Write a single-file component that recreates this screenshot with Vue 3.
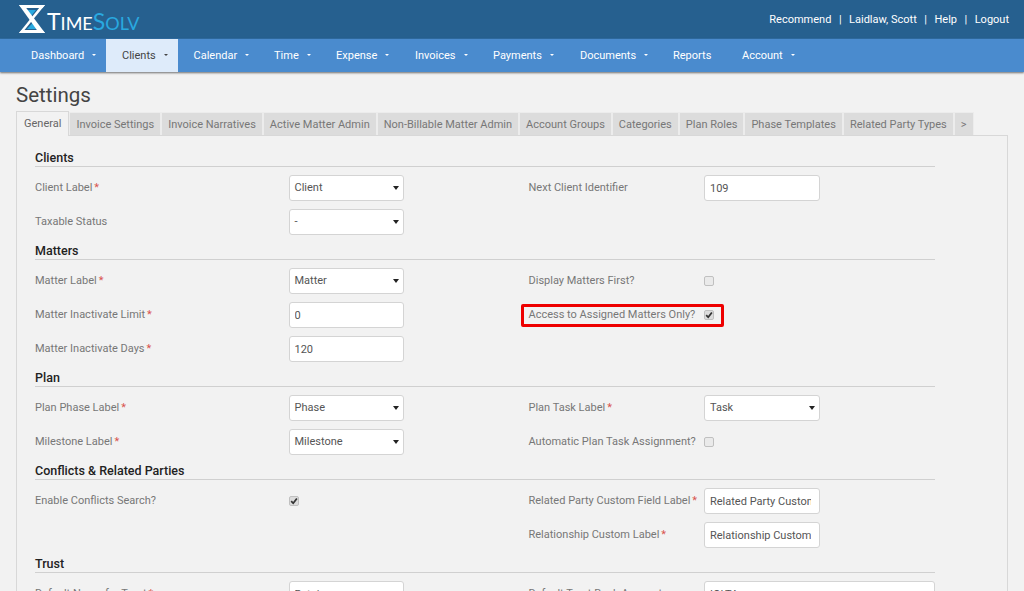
<script setup>
const navItems = [
  { label: 'Dashboard', caret: true, w: 91 },
  { label: 'Clients', caret: true, w: 71.5, active: true },
  { label: 'Calendar', caret: true, w: 80.5 },
  { label: 'Time', caret: true, w: 62 },
  { label: 'Expense', caret: true, w: 79 },
  { label: 'Invoices', caret: true, w: 78 },
  { label: 'Payments', caret: true, w: 87 },
  { label: 'Documents', caret: true, w: 93 },
  { label: 'Reports', caret: false, w: 69 },
  { label: 'Account', caret: true, w: 81 }
]
const tabs = ['General', 'Invoice Settings', 'Invoice Narratives', 'Active Matter Admin', 'Non-Billable Matter Admin', 'Account Groups', 'Categories', 'Plan Roles', 'Phase Templates', 'Related Party Types', '>']
const sections = [
  {
    title: 'Clients',
    rows: [
      [{ label: 'Client Label', req: true, type: 'select', value: 'Client' }, { label: 'Next Client Identifier', type: 'input', value: '109' }],
      [{ label: 'Taxable Status', type: 'select', value: '-' }, null]
    ]
  },
  {
    title: 'Matters',
    rows: [
      [{ label: 'Matter Label', req: true, type: 'select', value: 'Matter' }, { label: 'Display Matters First?', type: 'check', checked: false }],
      [{ label: 'Matter Inactivate Limit', req: true, type: 'input', value: '0' }, { label: 'Access to Assigned Matters Only?', type: 'check', checked: true, mark: true }],
      [{ label: 'Matter Inactivate Days', req: true, type: 'input', value: '120' }, null]
    ]
  },
  {
    title: 'Plan',
    rows: [
      [{ label: 'Plan Phase Label', req: true, type: 'select', value: 'Phase' }, { label: 'Plan Task Label', req: true, type: 'select', value: 'Task' }],
      [{ label: 'Milestone Label', req: true, type: 'select', value: 'Milestone' }, { label: 'Automatic Plan Task Assignment?', type: 'check', checked: false }]
    ]
  },
  {
    title: 'Conflicts & Related Parties',
    rows: [
      [{ label: 'Enable Conflicts Search?', type: 'check', checked: true }, { label: 'Related Party Custom Field Label', req: true, type: 'input', value: 'Related Party Custom Field' }],
      [null, { label: 'Relationship Custom Label', req: true, type: 'input', value: 'Relationship Custom Label' }]
    ]
  },
  {
    title: 'Trust',
    rows: [
      [{ label: 'Default Name for Trust', req: true, type: 'input', value: 'Retainer' }, { label: 'Default Trust Bank Account', type: 'input', value: 'IOLTA', wide: true }]
    ]
  }
]
</script>

<template>
  <div class="page">
    <header class="topbar">
      <div class="logo">
        <svg class="mark" viewBox="0 0 26 28" width="26" height="28" aria-hidden="true">
          <polygon points="7,5 17,5 12.5,10.5" fill="#29a9e0" />
          <polygon points="14,17.5 20,24 8,24" fill="#29a9e0" />
          <polygon points="0,0 26,0 23.5,3 2.5,3" fill="#fff" />
          <polygon points="0,0 5,0 26,28 20,28" fill="#fff" />
          <polygon points="22.5,0 26,0 3,28 0,28" fill="#fff" />
          <polygon points="2.5,25 23.5,25 26,28 0,28" fill="#fff" />
        </svg>
        <span class="wordmark"><b>T</b><i>IME</i><b class="blue">S</b><i class="blue">OLV</i></span>
      </div>
      <nav class="toplinks">
        <a>Recommend</a><span>|</span><a>Laidlaw, Scott</a><span>|</span><a>Help</a><span>|</span><a>Logout</a>
      </nav>
    </header>

    <nav class="mainnav">
      <a
        v-for="item in navItems"
        :key="item.label"
        class="navitem"
        :class="{ active: item.active }"
        :style="{ width: item.w + 'px' }"
      >
        {{ item.label }}<i v-if="item.caret" class="navcaret"></i>
      </a>
    </nav>

    <main class="content">
      <h1 class="title">Settings</h1>
      <ul class="tabs">
        <li v-for="(tab, i) in tabs" :key="tab" class="tab" :class="{ current: i === 0 }">{{ tab }}</li>
      </ul>
      <div class="panel">
        <section v-for="sec in sections" :key="sec.title" class="section">
          <h2 class="heading">{{ sec.title }}</h2>
          <div v-for="(row, r) in sec.rows" :key="r" class="row">
            <div v-for="(f, c) in row" :key="c" class="field">
              <div v-if="f" class="fieldline" :class="{ marked: f.mark }">
                <label class="label">{{ f.label }}<em v-if="f.req">*</em></label>
                <div v-if="f.type === 'select'" class="select">{{ f.value }}<i class="selcaret"></i></div>
                <input v-else-if="f.type === 'input'" class="input" :class="{ wide: f.wide }" :value="f.value" readonly />
                <span v-else class="check" :class="{ on: f.checked }">
                  <svg v-if="f.checked" viewBox="0 0 10 10" width="8" height="8"><path d="M1.5 5.2 L4 7.8 L8.6 1.8" fill="none" stroke="#333" stroke-width="2.2" /></svg>
                </span>
              </div>
            </div>
          </div>
        </section>
      </div>
    </main>
  </div>
</template>

<style>
html, body { margin: 0; background: #f2f2f2; overflow: hidden; }
</style>

<style scoped>
.page { height: 591px; overflow: hidden; font-family: Roboto, "Liberation Sans", sans-serif; font-size: 11px; color: #777; background: #f2f2f2; }
.topbar { height: 38px; background: #26608f; display: flex; align-items: center; justify-content: space-between; padding: 0 15px 0 19px; border-bottom: 1px solid #2f6da3; }
.logo { display: flex; align-items: center; height: 38px; }
.mark { display: block; }
.wordmark { font-family: Lato, "Open Sans", sans-serif; color: #fff; line-height: 1; margin-left: 2px; margin-top: 4px; letter-spacing: 0; }
.wordmark b { font-weight: 400; font-size: 23px; }
.wordmark i { font-style: normal; font-weight: 400; font-size: 18px; }
.wordmark .blue { color: #29a9e0; }
.toplinks { display: flex; align-items: center; color: #fff; font-size: 11px; }
.toplinks span { margin: 0 7.5px; }
.mainnav { height: 33px; background: #4a8bce; display: flex; padding-left: 15px; box-shadow: 0 1px 2px rgba(0,0,0,.55); position: relative; }
.navitem { display: flex; align-items: center; box-sizing: border-box; padding: 0 0 1px 16px; color: #fff; font-size: 11px; white-space: nowrap; }
.navitem.active { background: #deebfa; color: #444; }
.navcaret { display: inline-block; margin-left: 8px; width: 0; height: 0; border-left: 2.5px solid transparent; border-right: 2.5px solid transparent; border-top: 2.5px solid currentColor; }
.content { padding: 0 16px; }
.title { margin: 0; padding-top: 11px; height: 28px; font-weight: 400; font-size: 20.5px; line-height: 24px; color: #444; }
.tabs { list-style: none; margin: 0; padding: 0; display: flex; height: 24px; }
.tab { box-sizing: border-box; height: 23px; margin-top: 1px; padding: 0 6px; line-height: 23px; background: #dcdcdc; border: 1px solid #ececec; border-bottom: 0; white-space: nowrap; font-size: 11px; color: #777; }
.tab.current { height: 25px; margin-top: 0; padding: 0 7px; background: #f2f2f2; border: 1px solid #d8d8d8; border-bottom: 0; color: #666; position: relative; z-index: 1; }
.panel { box-sizing: border-box; width: 992px; height: 470px; border: 1px solid #d8d8d8; padding: 13px 72px 0 18px; }
.section { margin-bottom: 7px; }
.heading { margin: 0 0 8px; height: 17px; border-bottom: 1px solid #d0d0d0; font-size: 12.5px; line-height: 17px; font-weight: 500; color: #222; }
.row { display: grid; grid-template-columns: 493.5px 1fr; height: 26px; }
.row + .row { margin-top: 8px; }
.fieldline { display: flex; align-items: center; height: 26px; position: relative; }
.marked::after { content: ""; position: absolute; left: -7.5px; top: 2px; width: 203px; height: 23px; box-sizing: border-box; border: 3px solid #ee0000; border-radius: 2px; pointer-events: none; }
.label { width: 253.5px; flex: none; color: #777; white-space: nowrap; padding-bottom: 1px; }
.field:nth-child(2) .label { width: 175.5px; }
.label em { font-style: normal; color: #d9534f; margin-left: 2px; }
.select, .input { box-sizing: border-box; width: 115.5px; height: 26px; background: #fff; border: 1px solid #d4d4d4; border-radius: 3px; font-family: inherit; font-size: 11px; color: #555; padding: 0 8px 0 5px; line-height: 23px; position: relative; outline: none; }
.input.wide { width: 231px; }
.selcaret { position: absolute; right: 4px; top: 10px; width: 0; height: 0; border-left: 3px solid transparent; border-right: 3px solid transparent; border-top: 4px solid #222; }
.check { box-sizing: border-box; width: 10px; height: 10px; background: #eaeaea; border: 1px solid #c0c0c0; border-radius: 2px; display: flex; align-items: center; justify-content: center; }
.check.on { background: #dcdcdc; }
.check svg { flex: none; }
</style>
